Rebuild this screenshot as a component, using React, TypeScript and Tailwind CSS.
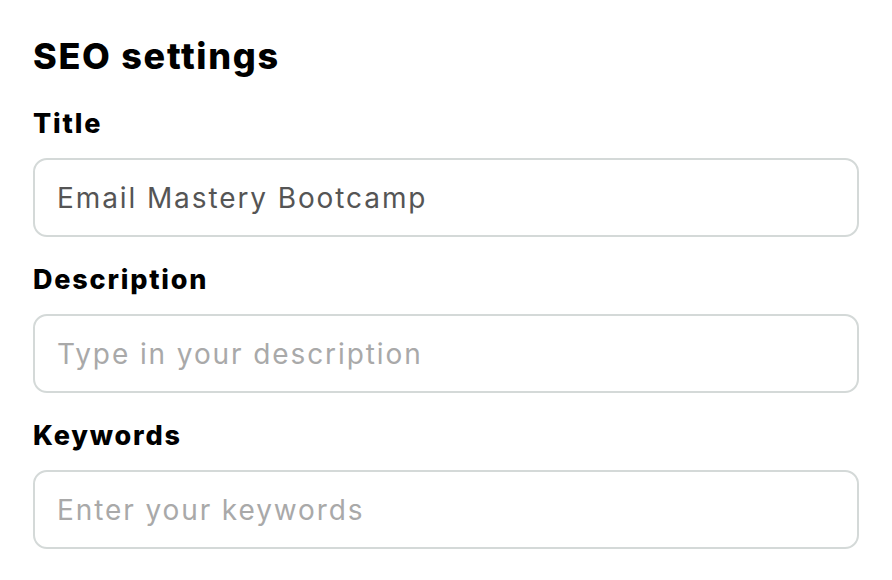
import React from "react";

const font = { fontFamily: "Inter, 'Noto Sans', sans-serif" };

function Field({ label, value, placeholder }: { label: string; value?: string; placeholder: string }) {
  return (
    <div className="flex flex-col">
      <label className="text-[27px] leading-[34px] font-extrabold text-black tracking-[1.8px]">{label}</label>
      <input
        readOnly
        defaultValue={value}
        placeholder={placeholder}
        className="mt-[17px] h-[79px] w-full rounded-[14px] border-2 border-[#d4d9d8] bg-white px-[22px] text-[28px] tracking-[1.9px] text-[#555555] placeholder:text-[#a9a9a9] outline-none"
        style={font}
      />
    </div>
  );
}

export default function App() {
  return (
    <div className="min-h-screen bg-white px-[33px] pt-[36px]" style={font}>
      <h1 className="text-[36px] leading-[40px] font-extrabold text-black tracking-[1.7px]">SEO settings</h1>
      <div className="mt-[31px] flex flex-col gap-[26px]">
        <Field label="Title" value="Email Mastery Bootcamp" placeholder="" />
        <Field label="Description" placeholder="Type in your description" />
        <Field label="Keywords" placeholder="Enter your keywords" />
      </div>
    </div>
  );
}
